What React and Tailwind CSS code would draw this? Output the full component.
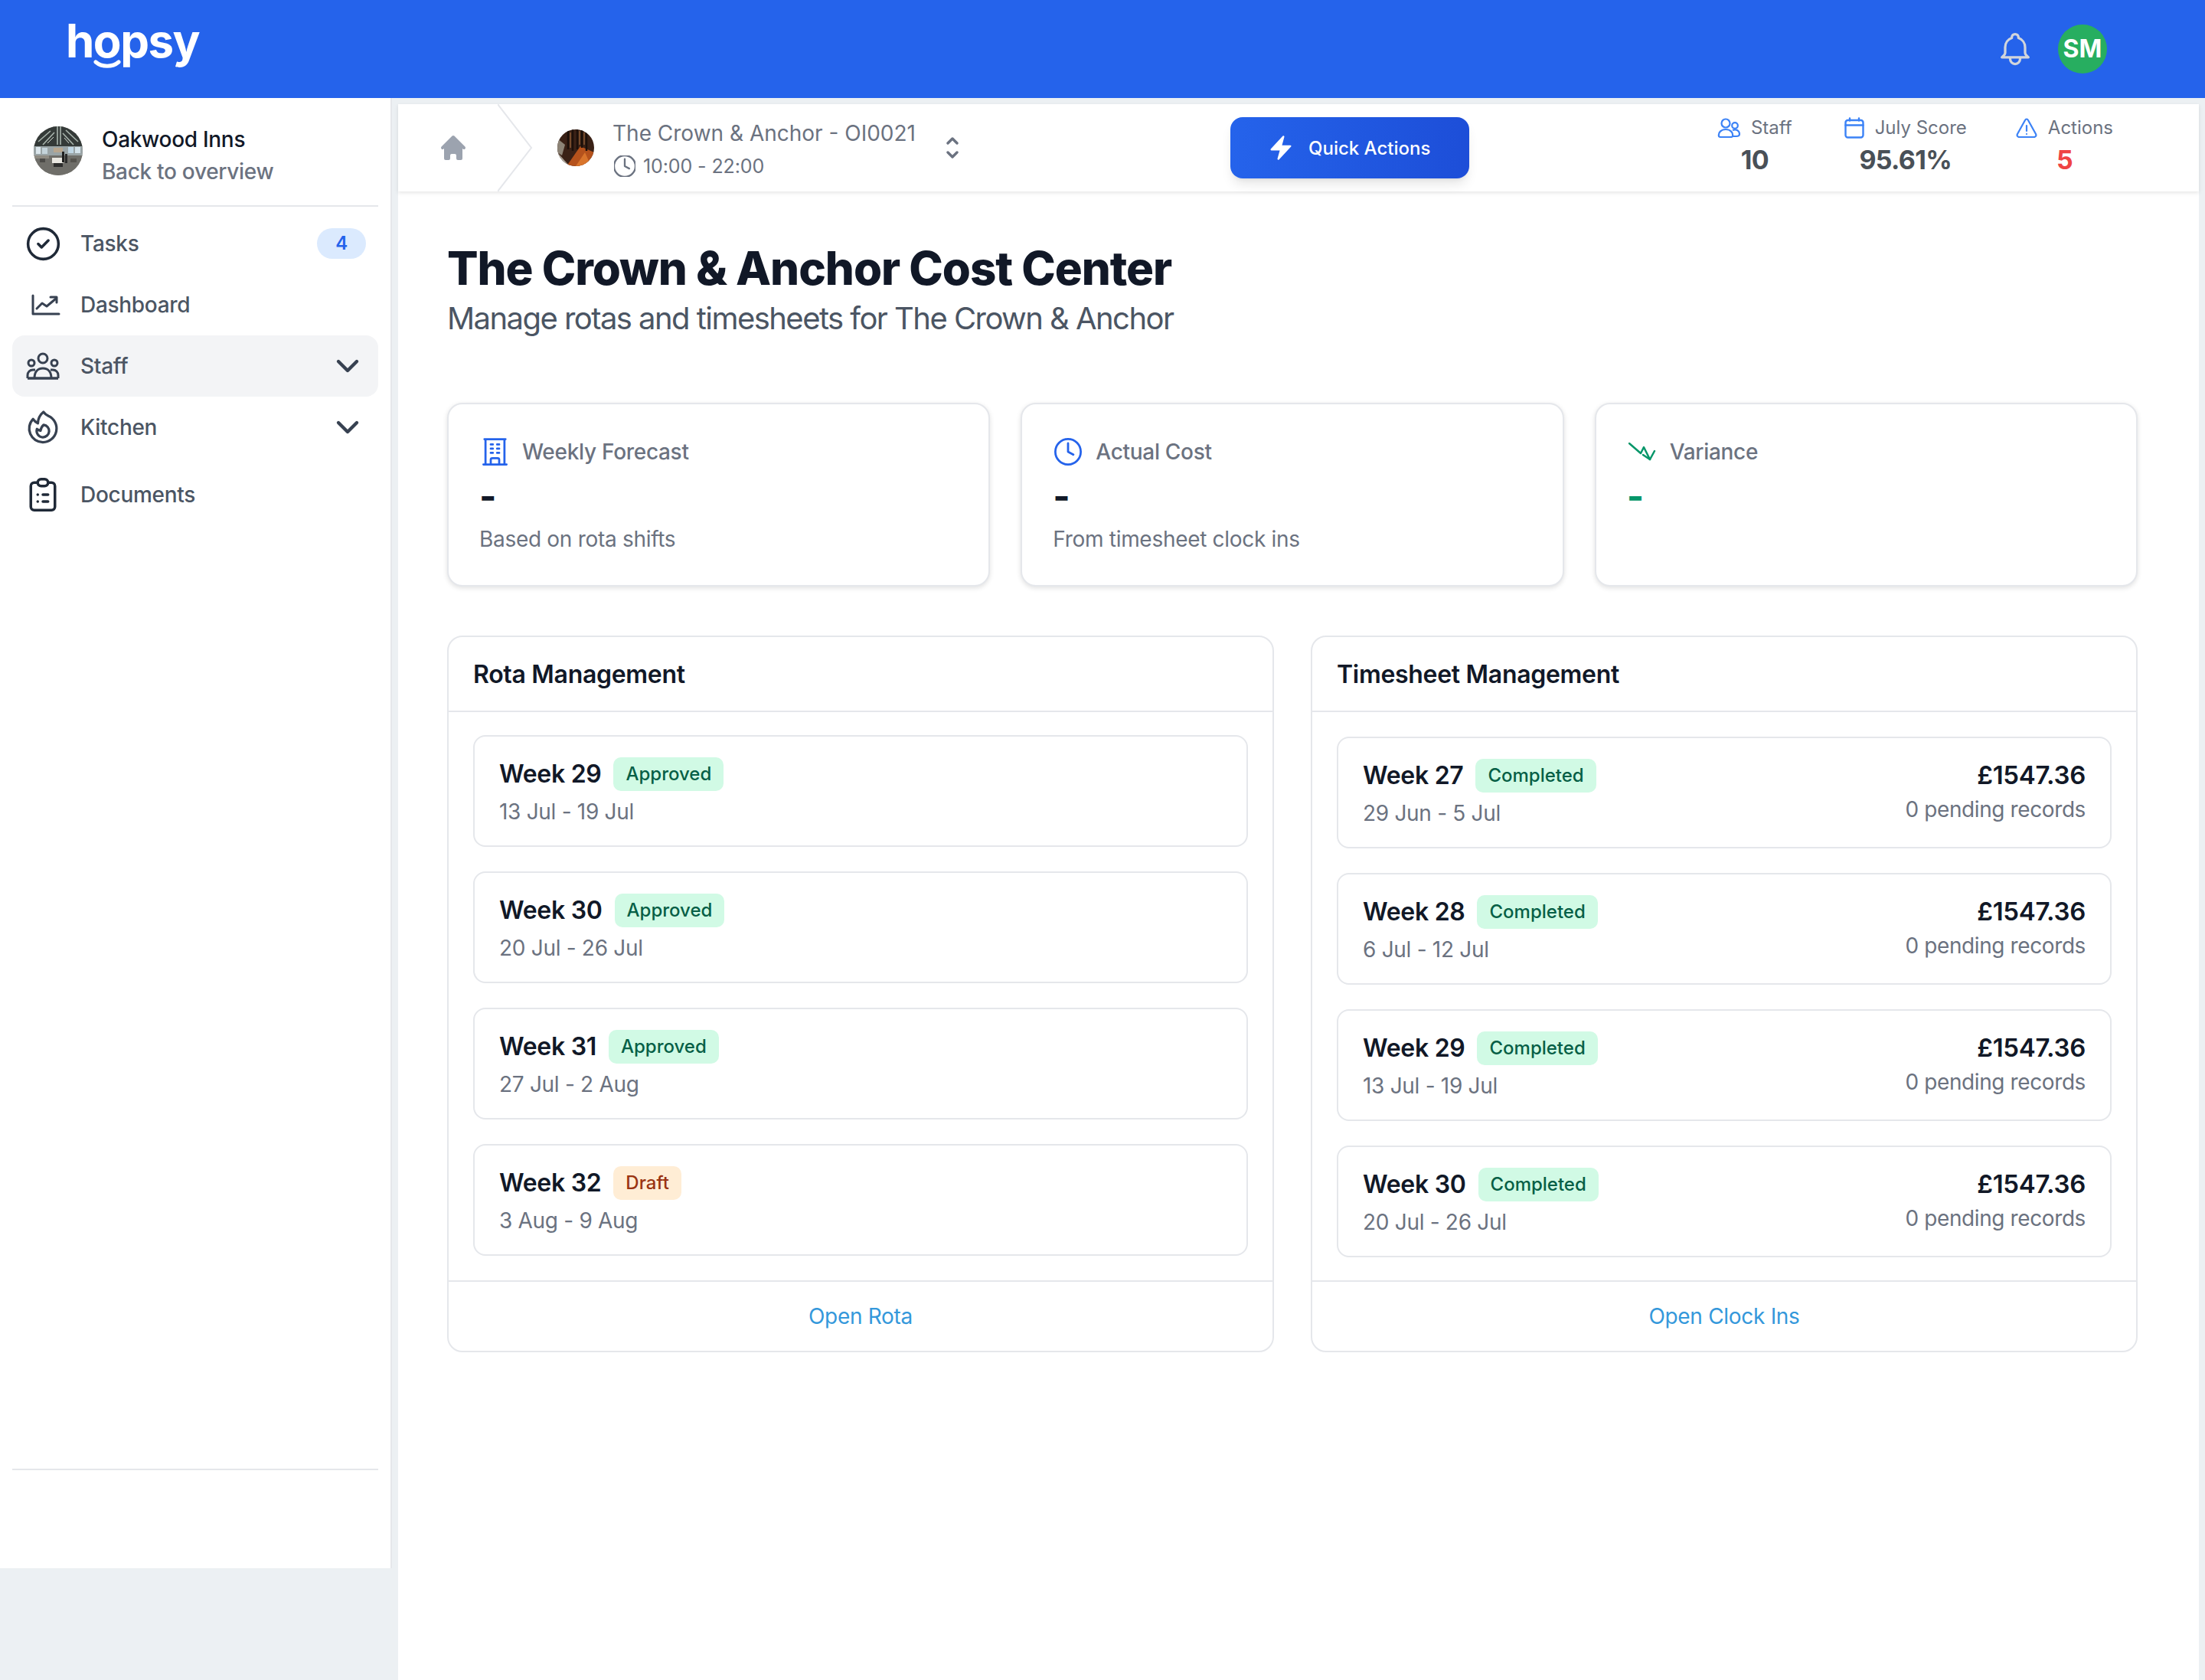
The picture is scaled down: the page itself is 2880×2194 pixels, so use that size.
import { ChevronDown } from "lucide-react";

const rotaWeeks = [
  { week: "Week 29", status: "Approved", dates: "13 Jul - 19 Jul" },
  { week: "Week 30", status: "Approved", dates: "20 Jul - 26 Jul" },
  { week: "Week 31", status: "Approved", dates: "27 Jul - 2 Aug" },
  { week: "Week 32", status: "Draft", dates: "3 Aug - 9 Aug" },
];

const timesheetWeeks = [
  { week: "Week 27", dates: "29 Jun - 5 Jul" },
  { week: "Week 28", dates: "6 Jul - 12 Jul" },
  { week: "Week 29", dates: "13 Jul - 19 Jul" },
  { week: "Week 30", dates: "20 Jul - 26 Jul" },
];

function OakwoodAvatar() {
  return (
    <svg viewBox="0 0 64 64" className="h-16 w-16 shrink-0 rounded-full">
      <rect width="64" height="64" fill="#85857f" />
      <rect width="64" height="26" fill="#343a38" />
      <path d="M6 20 22 6M12 24 27 8M58 20 42 5M52 24 38 9M31 0v24M35 0v24" stroke="#a9b5ad" strokeWidth="1.6" />
      <path d="M18 22 26 14M46 22 40 15" stroke="#d6ddd4" strokeWidth="1" />
      <rect y="26" width="64" height="12" fill="#9aa4a6" />
      <rect x="3" y="27" width="6" height="9" fill="#dbe6ec" />
      <rect x="11" y="28" width="7" height="8" fill="#c4d3da" />
      <rect x="45" y="27" width="7" height="8" fill="#bfd6e4" />
      <rect x="54" y="27" width="7" height="8" fill="#d3e2ea" />
      <rect x="26" y="28" width="12" height="6" fill="#b7a68f" />
      <rect y="38" width="64" height="26" fill="#6f6e69" />
      <rect x="0" y="38" width="20" height="4" fill="#8f8b83" />
      <rect x="24" y="41" width="15" height="7" fill="#e9e7e1" />
      <rect x="37" y="33" width="3" height="14" fill="#1f1f1f" />
      <rect x="41" y="36" width="3" height="12" fill="#2b2b2b" />
      <rect x="26" y="48" width="12" height="5" fill="#2e2e2e" />
      <rect x="8" y="42" width="7" height="5" fill="#4c4b48" />
      <rect x="48" y="42" width="8" height="5" fill="#55534e" />
    </svg>
  );
}

function CrownAvatar() {
  return (
    <svg viewBox="0 0 48 48" className="h-12 w-12 shrink-0 rounded-full">
      <rect width="48" height="48" fill="#3a2116" />
      <path d="M0 30 16 48H0Z" fill="#a9a196" />
      <path d="M0 12 10 20 6 34 0 30Z" fill="#8d8477" />
      <path d="M12 48 30 22 48 30V48Z" fill="#b5521c" />
      <path d="M24 48 36 30 44 48Z" fill="#d9752c" />
      <path d="M14 2v24M20 0v28M26 0v26M32 0v24M38 2v26" stroke="#1c100a" strokeWidth="2.5" />
      <path d="M17 4v20M29 2v18M35 4v16" stroke="#8a5a34" strokeWidth="1.5" />
    </svg>
  );
}

function NavItem({ icon, label, active, chevron, badge, className = "" }) {
  return (
    <div className={`mx-4 flex h-20 items-center rounded-2xl pr-4 ${active ? "bg-[#F3F4F6]" : ""} ${className}`}>
      <div className="flex w-20 shrink-0 items-center justify-center text-[#374151]">{icon}</div>
      <span className="ml-[9px] text-[28px] font-medium text-[#4B5563]">{label}</span>
      {badge && (
        <span className="ml-auto flex h-10 w-16 items-center justify-center rounded-full bg-[#DBEAFE] text-[24px] font-semibold text-[#2563EB]">
          {badge}
        </span>
      )}
      {chevron && <ChevronDown className="ml-auto h-12 w-12 text-[#374151]" strokeWidth={2.2} />}
    </div>
  );
}

function Sidebar() {
  return (
    <aside className="flex h-[1920px] w-[512px] shrink-0 flex-col border-r-2 border-[#E5E7EB] bg-white">
      <div className="mx-4 flex h-[142px] shrink-0 items-center border-b-2 border-[#E5E7EB] pl-7 pb-[2px]">
        <OakwoodAvatar />
        <div className="ml-[25px] mt-[11px] text-[28px] font-medium leading-[42px]">
          <div className="text-[#111827]">Oakwood Inns</div>
          <div className="text-[#6B7280]">Back to overview</div>
        </div>
      </div>
      <nav className="mt-2 flex flex-col">
        <NavItem
          label="Tasks"
          badge="4"
          icon={
            <svg viewBox="0 0 24 24" fill="none" stroke="currentColor" strokeWidth="1.6" strokeLinecap="round" strokeLinejoin="round" className="h-[53px] w-[53px] text-[#1F2937]">
              <path d="M9 12l2 2 4-4m6 2a9 9 0 11-18 0 9 9 0 0118 0z" />
            </svg>
          }
        />
        <NavItem
          label="Dashboard"
          icon={
            <svg viewBox="0 0 38 28" fill="none" stroke="currentColor" strokeWidth="3" strokeLinecap="round" strokeLinejoin="round" className="ml-2 h-7 w-[38px]">
              <path d="M2 2v24h34" />
              <path d="M7 19l7-7 6 4 12-10" />
              <path d="M25 4h8v7" />
            </svg>
          }
        />
        <NavItem
          label="Staff"
          active
          chevron
          icon={
            <svg viewBox="0 0 44 36" fill="none" stroke="currentColor" strokeWidth="3" strokeLinejoin="round" className="h-9 w-11">
              <circle cx="22" cy="8" r="6" />
              <circle cx="7" cy="14" r="4" />
              <circle cx="37" cy="14" r="4" />
              <path d="M11 34c0-8 4-13 11-13s11 5 11 13" />
              <path d="M2 34v-4c0-4 3-7 7-7h3M42 34v-4c0-4-3-7-7-7h-3" />
              <path d="M2 34h40" strokeWidth="3.4" />
            </svg>
          }
        />
        <NavItem
          label="Kitchen"
          chevron
          icon={
            <svg viewBox="0 0 24 24" fill="none" stroke="currentColor" strokeWidth="1.5" strokeLinecap="round" strokeLinejoin="round" className="h-[52px] w-[52px]">
              <path d="M15.362 5.214A8.252 8.252 0 0 1 12 21 8.25 8.25 0 0 1 6.038 7.047 8.287 8.287 0 0 0 9 9.601a8.983 8.983 0 0 1 3.361-6.867 8.21 8.21 0 0 0 3 2.48Z" />
              <path d="M12 18a3.75 3.75 0 0 0 .495-7.468 5.99 5.99 0 0 0-1.925 3.547 5.975 5.975 0 0 1-2.133-1.001A3.75 3.75 0 0 0 12 18Z" />
            </svg>
          }
        />
        <NavItem
          label="Documents"
          className="mt-2"
          icon={
            <svg viewBox="0 0 24 24" fill="none" stroke="currentColor" strokeWidth="1.55" strokeLinecap="round" strokeLinejoin="round" className="h-[54px] w-[54px] text-[#1F2937]">
              <path d="M9 5H7a2 2 0 00-2 2v12a2 2 0 002 2h10a2 2 0 002-2V7a2 2 0 00-2-2h-2M9 5a2 2 0 002 2h2a2 2 0 002-2M9 5a2 2 0 012-2h2a2 2 0 012 2m-3 7h3m-3 4h3m-6-4h.01M9 16h.01" />
            </svg>
          }
        />
      </nav>
      <div className="mx-4 mb-[128px] mt-auto border-b-2 border-[#E5E7EB]" />
    </aside>
  );
}

function HeaderStat({ icon, label, value, valueClass = "text-[#495057]", className = "" }) {
  return (
    <div className={`flex flex-col items-center ${className}`}>
      <div className="flex h-8 items-center gap-[14px] text-[24px] leading-8 text-[#6B7280]">
        {icon}
        <span>{label}</span>
      </div>
      <div className={`mt-[2px] text-[34px] font-bold leading-[48px] tracking-[-0.02em] ${valueClass}`}>{value}</div>
    </div>
  );
}

function TopBar() {
  return (
    <div className="relative flex h-[114px] items-center bg-white tracking-normal shadow-[0_2px_5px_rgba(0,0,0,0.10)]">
      <div className="flex h-full w-[1087px] shrink-0 items-center">
        <div className="flex w-[130px] shrink-0 justify-center pl-[14px]">
          <svg viewBox="0 0 20 20" fill="#9CA3AF" className="h-10 w-10">
            <path d="M10.707 2.293a1 1 0 00-1.414 0l-7 7a1 1 0 001.414 1.414L4 10.414V17a1 1 0 001 1h2a1 1 0 001-1v-2a1 1 0 011-1h2a1 1 0 011 1v2a1 1 0 001 1h2a1 1 0 001-1v-6.586l.293.293a1 1 0 001.414-1.414l-7-7z" />
          </svg>
        </div>
        <svg viewBox="0 0 46 114" fill="none" stroke="#E5E7EB" strokeWidth="2" className="h-full w-[46px] shrink-0">
          <path d="M0 0 44 57 0 114" />
        </svg>
        <div className="ml-8">
          <CrownAvatar />
        </div>
        <div className="ml-6 flex flex-col">
          <div className="text-[28px] font-normal leading-10 text-[#6B7280]">The Crown &amp; Anchor - OI0021</div>
          <div className="mt-[7px] flex items-center gap-[10px] text-[25px] leading-8 tracking-[-0.1px] text-[#6B7280]">
            <svg viewBox="3 3 18 18" fill="none" stroke="currentColor" strokeWidth="1.5" strokeLinecap="round" strokeLinejoin="round" className="ml-[2px] h-7 w-7">
              <path d="M12 6v6l3.75 2M21 12a9 9 0 1 1-18 0 9 9 0 0 1 18 0Z" />
            </svg>
            <span>10:00 - 22:00</span>
          </div>
        </div>
        <svg viewBox="0 0 16 28" fill="none" stroke="#6B7280" strokeWidth="3.4" strokeLinecap="round" strokeLinejoin="round" className="ml-10 h-7 w-4 shrink-0">
          <path d="M2 8l6-6 6 6M2 20l6 6 6-6" />
        </svg>
      </div>
      <button className="flex h-20 w-[312px] items-center rounded-2xl bg-gradient-to-r from-[#2563EB] to-[#1D4ED8] pl-[48px] text-[24px] font-medium text-white shadow-lg">
        <svg viewBox="0 0 24 24" fill="white" className="h-9 w-9 shrink-0">
          <path d="M14.615 1.595a.75.75 0 0 1 .359.852L12.982 9.75h7.268a.75.75 0 0 1 .548 1.262l-10.5 11.25a.75.75 0 0 1-1.272-.71l1.992-7.302H3.75a.75.75 0 0 1-.548-1.262l10.5-11.25a.75.75 0 0 1 .913-.143Z" />
        </svg>
        <span className="ml-[18px] pt-[2px]">Quick Actions</span>
      </button>
      <div className="ml-auto mr-[112px] -mt-[3px] flex items-start gap-[64px]">
        <HeaderStat
          className="mr-[4px]"
          label="Staff"
          value="10"
          icon={
            <svg viewBox="0 0 30 26" fill="none" stroke="#3B82F6" strokeWidth="2.2" className="h-[26px] w-[30px]">
              <circle cx="11" cy="7" r="5.5" />
              <circle cx="23" cy="10" r="3.8" />
              <path d="M2 24c-1-5 3-9 9-9s10 4 9 9c-.5 1-2 1-3 1H5c-1 0-2.500 0-3-1Z" />
              <path d="M20 16c5-2 9 1 9 5 0 2-2 3-4 3h-5" />
            </svg>
          }
        />
        <HeaderStat
          label="July Score"
          value="95.61%"
          icon={
            <svg viewBox="0 0 26 28" fill="none" stroke="#3B82F6" strokeWidth="2.4" strokeLinecap="round" className="h-7 w-[26px]">
              <rect x="1.500" y="4" width="23" height="22.500" rx="3" />
              <path d="M1.500 10.500h23M7 1.500v3M19 1.500v3" />
            </svg>
          }
        />
        <HeaderStat
          label="Actions"
          value="5"
          valueClass="text-[#EF4444]"
          icon={
            <svg viewBox="0 0 28 26" fill="none" stroke="#3B82F6" strokeWidth="2.2" strokeLinecap="round" strokeLinejoin="round" className="h-[26px] w-7">
              <path d="M12 3 2 21c-1 2 0 4 2.500 4h19c2.500 0 3.500-2 2.500-4L16 3c-1-2-3-2-4 0Z" />
              <path d="M14 10v7M14 21v.01" />
            </svg>
          }
        />
      </div>
    </div>
  );
}

function StatCard({ icon, title, value, caption, valueClass = "text-[#111827]" }) {
  return (
    <div className="h-[240px] rounded-[20px] border-2 border-[#E5E7EB] bg-white px-10 pt-[42px] shadow-[0_2px_6px_rgba(0,0,0,0.12)]">
      <div className="flex h-10 items-center gap-4">
        <div className="flex w-10 shrink-0 items-center justify-center">{icon}</div>
        <span className="text-[28px] font-medium leading-10 text-[#6B7280]">{title}</span>
      </div>
      <div className={`mt-[2px] h-[72px] text-[48px] font-bold leading-[72px] ${valueClass}`}>{value}</div>
      {caption && <div className="text-[28px] leading-10 text-[#6B7280]">{caption}</div>}
    </div>
  );
}

function Badge({ status }) {
  const draft = status === "Draft";
  return (
    <span
      className={`flex h-11 items-center rounded-[10px] px-4 text-[24px] font-medium tracking-normal ${
        draft ? "bg-[#FFEDD5] text-[#9A3412]" : "bg-[#D1FAE5] text-[#065F46]"
      }`}
    >
      {status}
    </span>
  );
}

function WeekCard({ week, status, dates, right }) {
  return (
    <div className="flex h-[146px] items-start justify-between rounded-2xl border-2 border-[#E5E7EB] bg-white px-8 pt-[27px]">
      <div>
        <div className="flex h-11 items-center gap-4">
          <span className="text-[32px] font-semibold text-[#111827]">{week}</span>
          <Badge status={status} />
        </div>
        <div className="mt-[7px] text-[28px] leading-10 text-[#6B7280]">{dates}</div>
      </div>
      {right}
    </div>
  );
}

function Panel({ title, linkLabel, listClass, children }) {
  return (
    <section className="flex h-[936px] flex-col rounded-[20px] border-2 border-[#E5E7EB] bg-white">
      <div className="flex h-[98px] shrink-0 items-center border-b-2 border-[#E5E7EB] px-8 pt-[2px]">
        <h2 className="text-[32px] font-semibold text-[#111827]">{title}</h2>
      </div>
      <div className={`flex flex-1 flex-col gap-8 px-8 ${listClass}`}>{children}</div>
      <div className="flex h-[92px] shrink-0 items-center justify-center border-t-2 border-[#E5E7EB] text-[28px] text-[#3498DB]">
        {linkLabel}
      </div>
    </section>
  );
}

export default function App() {
  return (
    <div className="flex h-[2194px] w-[2880px] flex-col overflow-hidden bg-[#ECF0F3] tracking-[-0.3px] antialiased [font-family:Inter,sans-serif]">
      <header className="flex h-32 shrink-0 items-center bg-[#2563EB] tracking-normal">
        <div className="relative ml-[86px] -mt-[22px] text-[60px] font-bold leading-[64px] tracking-[-0.025em] text-white">
          hopsy
          <svg viewBox="0 0 36 12" fill="none" stroke="white" strokeWidth="5" strokeLinecap="round" className="absolute left-[36px] top-[57px] h-3 w-9">
            <path d="M3 3c8 7 22 7 30 0" />
          </svg>
        </div>
        <div className="ml-auto mr-[128px] flex items-center gap-[30px]">
          <svg viewBox="0 0 24 24" fill="none" stroke="#D1D5DB" strokeWidth="1.5" strokeLinecap="round" strokeLinejoin="round" className="h-[52px] w-[52px]">
            <path d="M15 17h5l-1.405-1.405A2.032 2.032 0 0118 14.158V11a6.002 6.002 0 00-4-5.659V5a2 2 0 10-4 0v.341C7.67 6.165 6 8.388 6 11v3.159c0 .538-.214 1.055-.595 1.436L4 17h5m6 0v1a3 3 0 11-6 0v-1m6 0H9" />
          </svg>
          <div className="flex h-16 w-16 items-center justify-center rounded-full bg-[#27AE60] text-[32px] font-bold text-white">SM</div>
        </div>
      </header>
      <div className="flex min-h-0 flex-1">
        <Sidebar />
        <main className="ml-2 mr-2 min-w-0 flex-1 pt-2">
          <div className="h-full bg-white">
            <TopBar />
            <div className="pl-16 pr-20 pt-16">
              <h1 className="text-[60px] font-extrabold leading-[72px] tracking-[-1.05px] text-[#111827]">The Crown &amp; Anchor Cost Center</h1>
              <p className="mt-[2px] text-[40px] leading-[56px] tracking-[-1.55px] text-[#4B5563]">Manage rotas and timesheets for The Crown &amp; Anchor</p>
              <div className="mt-[82px] grid grid-cols-3 gap-10">
                <StatCard
                  title="Weekly Forecast"
                  value="-"
                  caption="Based on rota shifts"
                  icon={
                    <svg viewBox="3 2.250 18 19.500" fill="none" stroke="#2563EB" strokeWidth="1.5" strokeLinecap="round" strokeLinejoin="round" className="h-9 w-[33px]">
                      <path d="M3.750 21h16.500M4.500 3h15M5.250 3v18m13.500-18v18M9 6.750h1.500m-1.500 3h1.500m-1.500 3h1.500m3-6H15m-1.500 3H15m-1.500 3H15M9 21v-3.375c0-.621.504-1.125 1.125-1.125h3.750c.621 0 1.125.504 1.125 1.125V21" />
                    </svg>
                  }
                />
                <StatCard
                  title="Actual Cost"
                  value="-"
                  caption="From timesheet clock ins"
                  icon={
                    <svg viewBox="2.250 2.250 19.500 19.500" fill="none" stroke="#2563EB" strokeWidth="1.5" strokeLinecap="round" strokeLinejoin="round" className="h-9 w-9">
                      <path d="M12 6v6l3.750 2M21 12a9 9 0 1 1-18 0 9 9 0 0 1 18 0Z" />
                    </svg>
                  }
                />
                <StatCard
                  title="Variance"
                  value="-"
                  valueClass="text-[#059669]"
                  icon={
                    <svg viewBox="0 0 36 24" fill="none" stroke="#059669" strokeWidth="2.5" strokeLinecap="round" strokeLinejoin="round" className="h-6 w-9">
                      <path d="M1 1l15 13 4-8 8 16" />
                      <path d="M19 16l9 6 6-11" />
                    </svg>
                  }
                />
              </div>
              <div className="mt-16 grid grid-cols-2 gap-12">
                <Panel title="Rota Management" linkLabel="Open Rota" listClass="pt-[30px]">
                  {rotaWeeks.map((w) => (
                    <WeekCard key={w.week} {...w} />
                  ))}
                </Panel>
                <Panel title="Timesheet Management" linkLabel="Open Clock Ins" listClass="pt-8">
                  {timesheetWeeks.map((w) => (
                    <WeekCard
                      key={w.week}
                      {...w}
                      status="Completed"
                      right={
                        <div className="text-right">
                          <div className="flex h-11 items-center justify-end text-[33px] font-semibold text-[#111827]">£1547.36</div>
                          <div className="mt-[2px] text-[28px] leading-10 tracking-[-0.4px] text-[#6B7280]">0 pending records</div>
                        </div>
                      }
                    />
                  ))}
                </Panel>
              </div>
            </div>
          </div>
        </main>
      </div>
    </div>
  );
}
